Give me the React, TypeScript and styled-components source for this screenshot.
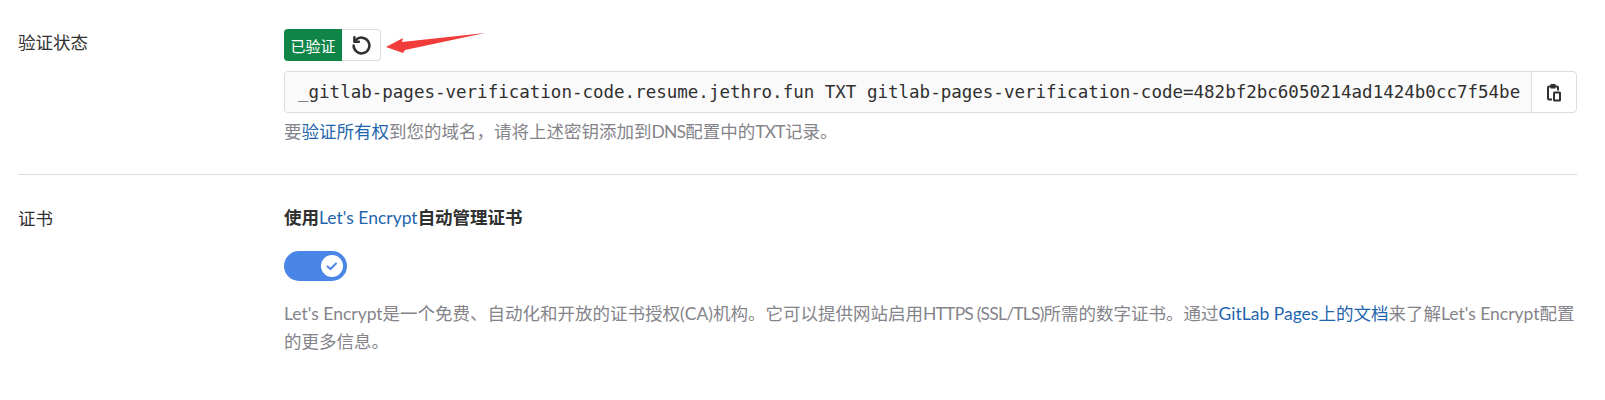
import styled, { createGlobalStyle } from "styled-components";

const GlobalStyle = createGlobalStyle`
  html, body {
    margin: 0;
    background: #fff;
  }

  body {
    font-family: Lato, "Noto Sans CJK SC", sans-serif;
    font-size: 17.5px;
    color: #303030;
  }
`;

const RECORD =
  "_gitlab-pages-verification-code.resume.jethro.fun TXT gitlab-pages-verification-code=482bf2bc6050214ad1424b0cc7f54be";

function RetryIcon() {
  return (
    <svg width="21" height="21" viewBox="0 0 16 16" fill="none" stroke="#303030" strokeWidth="1.9">
      <path d="M3.6 3.9A6 6 0 1 1 2 8" strokeLinecap="round" />
      <path d="M2.6 1.8v3.4H6" strokeLinejoin="round" strokeLinecap="round" />
    </svg>
  );
}

function CopyIcon() {
  return (
    <svg width="16" height="21" viewBox="0 0 16 20" fill="none" stroke="#303030" strokeWidth="2">
      <path d="M6 17H3a1 1 0 0 1-1-1V5a1 1 0 0 1 1-1h8a1 1 0 0 1 1 1v3" />
      <path d="M5.5 2.5h3V5h-3z" fill="#303030" />
      <rect x="8" y="10" width="6" height="8" rx="0.5" />
    </svg>
  );
}

function App() {
  return (
    <Root>
      <GlobalStyle />

      <Section>
        <Label>验证状态</Label>
        <Content>
          <StatusGroup>
            <Verified>已验证</Verified>
            <RetryBtn>
              <RetryIcon />
            </RetryBtn>
            <Arrow width="104" height="26" viewBox="0 0 104 26">
              <path d="M1 16 L18 7 L17 11 L100 2 L20 19 L18 22 Z" fill="#f23c3c" />
            </Arrow>
          </StatusGroup>

          <CodeField>
            <Code>{RECORD}</Code>
            <CopyBtn>
              <CopyIcon />
            </CopyBtn>
          </CodeField>

          <Help>
            要<Link>验证所有权</Link>到您的域名{"\uFF0C"}请将上述密钥添加到<Acronym>DNS</Acronym>配置中的<Acronym>TXT</Acronym>记录。
          </Help>
        </Content>
      </Section>

      <Divider />

      <Section>
        <Label>证书</Label>
        <Content>
          <Heading>
            使用<Link>Let's Encrypt</Link>自动管理证书
          </Heading>

          <Toggle>
            <Knob>
              <svg width="14" height="14" viewBox="0 0 14 14" fill="none" stroke="#4a85e8" strokeWidth="2">
                <path d="M2.5 7.5 5.5 10 11 4.5" strokeLinecap="round" strokeLinejoin="round" />
              </svg>
            </Knob>
          </Toggle>

          <CertHelp>
            Let's Encrypt是一个免费、自动化和开放的证书授权(CA)机构。它可以提供网站启用<Acronym>HTTPS (SSL/TLS)</Acronym>所需的数字证书。通过
            <Link>GitLab Pages上的文档</Link>来了解Let's Encrypt配置的更多信息。
          </CertHelp>
        </Content>
      </Section>
    </Root>
  );
}

export default App;

const Root = styled.div`
  display: flex;
  flex-direction: column;
  height: 400px;
  box-sizing: border-box;
  padding: 29px 28px 0 18px;
  overflow: hidden;
`;

const Section = styled.section`
  display: grid;
  grid-template-columns: 266px 1fr;
`;

const Label = styled.div`
  padding-top: 1px;
  line-height: 26px;
`;

const Content = styled.div`
  display: flex;
  flex-direction: column;
  min-width: 0;
`;

const StatusGroup = styled.div`
  position: relative;
  display: flex;
  height: 32px;
`;

const Verified = styled.div`
  display: flex;
  align-items: center;
  justify-content: center;
  width: 58px;
  box-sizing: border-box;
  background-color: #108548;
  color: #fff;
  font-size: 15px;
  border-radius: 4px 0 0 4px;
`;

const RetryBtn = styled.div`
  display: flex;
  align-items: center;
  justify-content: center;
  width: 39px;
  box-sizing: border-box;
  border: 1px solid #dcdcde;
  border-left: none;
  border-radius: 0 4px 4px 0;
`;

const Arrow = styled.svg`
  position: absolute;
  left: 101px;
  top: 2px;
`;

const CodeField = styled.div`
  display: flex;
  height: 42px;
  margin-top: 10px;
  box-sizing: border-box;
  border: 1px solid #dcdcde;
  border-radius: 4px;
`;

const Code = styled.div`
  flex: 1;
  display: flex;
  align-items: center;
  min-width: 0;
  padding-left: 13px;
  background-color: #fafafa;
  font-family: "DejaVu Sans Mono", monospace;
  font-size: 17.5px;
  white-space: nowrap;
  overflow: hidden;
  border-radius: 4px 0 0 4px;
`;

const CopyBtn = styled.div`
  display: flex;
  align-items: center;
  justify-content: center;
  width: 44px;
  border-left: 1px solid #dcdcde;
`;

const Help = styled.p`
  margin: 6px 0 0;
  color: #85848a;
  line-height: 26px;
`;

const Link = styled.span`
  color: #1f66ad;
  font-weight: 400;
`;

const Acronym = styled.span`
  letter-spacing: -0.8px;
`;

const Divider = styled.hr`
  width: 100%;
  height: 1px;
  margin: 29px 0 30px;
  border: none;
  background-color: #dcdcde;
`;

const Heading = styled.div`
  font-weight: 700;
  line-height: 26px;
`;

const Toggle = styled.div`
  display: flex;
  align-items: center;
  justify-content: flex-end;
  width: 63px;
  height: 30px;
  margin-top: 20px;
  padding-right: 4px;
  box-sizing: border-box;
  background-color: #4a85e8;
  border-radius: 15px;
`;

const Knob = styled.div`
  display: flex;
  align-items: center;
  justify-content: center;
  width: 22px;
  height: 22px;
  background-color: #fff;
  border-radius: 50%;
`;

const CertHelp = styled.p`
  margin: 19px 0 0;
  color: #85848a;
  line-height: 28px;
`;
